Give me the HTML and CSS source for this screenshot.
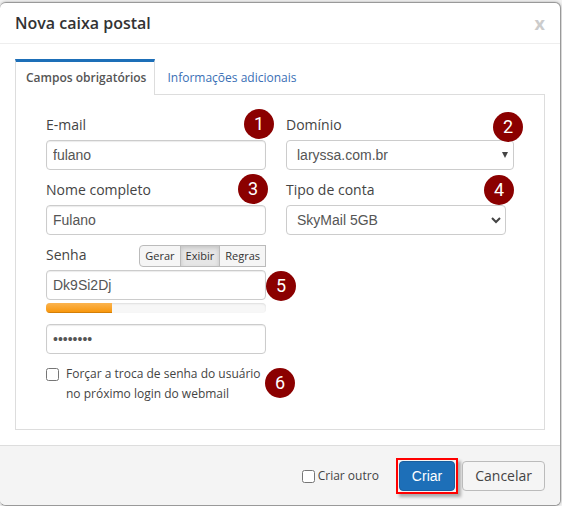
FILE: index.html
```html
<!DOCTYPE html>
<html lang="pt-BR">
<head>
    <meta charset="UTF-8">
    <title>Nova caixa postal</title>
    <link rel="stylesheet" href="styles.css">
</head>
<body>
    <form class="modal">
        <header class="modal-header">
            <h3>Nova caixa postal</h3>
            <button type="button" class="close" aria-label="Fechar">x</button>
        </header>

        <div class="modal-body">
            <nav class="tabs">
                <a class="tab active" href="#obrigatorios">Campos obrigatórios</a>
                <a class="tab" href="#adicionais">Informações adicionais</a>
            </nav>

            <div class="tab-content" id="obrigatorios">
                <div class="field">
                    <label for="email">E-mail</label>
                    <input type="text" id="email" name="email" value="fulano">
                    <span class="step step-1">1</span>
                </div>
                <div class="field">
                    <label for="domain">Domínio</label>
                    <div class="select">
                        <select id="domain" name="domain">
                            <option>laryssa.com.br</option>
                        </select>
                        <svg class="arrow" width="8" height="8" viewBox="0 0 8 8"><path d="M1 1h6L4 7z" fill="#444"/></svg>
                    </div>
                    <span class="step step-2">2</span>
                </div>
                <div class="field">
                    <label for="name">Nome completo</label>
                    <input type="text" id="name" name="name" value="Fulano">
                    <span class="step step-3">3</span>
                </div>
                <div class="field field-account">
                    <label for="account">Tipo de conta</label>
                    <div class="select">
                        <select id="account" name="account">
                            <option>SkyMail 5GB</option>
                        </select>
                        <svg class="arrow" width="10" height="8" viewBox="0 0 10 8"><path d="M1 2l4 4 4-4" fill="none" stroke="#444" stroke-width="2"/></svg>
                    </div>
                    <span class="step step-4">4</span>
                </div>
                <div class="field field-password">
                    <div class="label-row">
                        <label for="password">Senha</label>
                        <div class="btn-group">
                            <button type="button">Gerar</button>
                            <button type="button" class="active">Exibir</button>
                            <button type="button">Regras</button>
                        </div>
                    </div>
                    <input type="text" id="password" name="password" value="Dk9Si2Dj">
                    <div class="strength"><div class="bar" style="width: 30%"></div></div>
                    <input type="password" name="confirm" value="Dk9Si2Dj" aria-label="Confirmar senha">
                    <span class="step step-5">5</span>
                </div>
                <div class="field field-check">
                    <label class="check">
                        <input type="checkbox" name="force">
                        <span>Forçar a troca de senha do usuário no próximo login do webmail</span>
                    </label>
                    <span class="step step-6">6</span>
                </div>
            </div>
        </div>

        <footer class="modal-footer">
            <label class="check-small"><input type="checkbox" name="another">Criar outro</label>
            <span class="highlight"><button type="submit" class="btn btn-primary">Criar</button></span>
            <button type="button" class="btn">Cancelar</button>
        </footer>
    </form>
</body>
</html>
```

FILE: styles.css
```css
* {
    box-sizing: border-box;
}

body {
    margin: 0;
    padding: 2px 1px 0 0;
    background-color: #f2f2f2;
    color: #444;
    font: 14px/20px "Open Sans", sans-serif;
}

.modal {
    border: 1px solid #999;
    border-left: 0;
    border-radius: 6px;
    background-color: #fff;
    box-shadow: 0 0 3px rgba(0, 0, 0, 0.3);
    overflow: hidden;
}

.modal-header {
    display: flex;
    align-items: center;
    justify-content: space-between;
    height: 41px;
    padding: 0 15px;
    border-bottom: 1px solid #eee;
}

.modal-header h3 {
    margin: 0;
    color: #333;
    font-size: 16px;
    font-weight: 600;
}

.close {
    padding: 0;
    border: 0;
    background: none;
    color: #ccc;
    font: bold 18px/20px "Open Sans", sans-serif;
}

.modal-body {
    padding: 15px;
}

/* tabs */
.tabs {
    display: flex;
    font-size: 12px;
}

.tab {
    padding: 7px 12px;
    border-top: 3px solid transparent;
    color: #3a6fb5;
    line-height: 18px;
    text-decoration: none;
}

.tab.active {
    margin-bottom: -1px;
    padding: 7px 8px 8px 10px;
    border: 1px solid #ddd;
    border-top: 3px solid #1d6fb8;
    border-bottom: 0;
    background-color: #fff;
    color: #555;
    font-weight: 600;
    z-index: 1;
}

.tab-content {
    display: grid;
    grid-template-columns: minmax(0, 220px) minmax(0, 228px);
    column-gap: 20px;
    row-gap: 10px;
    padding: 20px 30px 25px;
    border: 1px solid #ddd;
}

/* fields */
.field {
    position: relative;
}

.field > label,
.label-row {
    display: block;
    margin-bottom: 5px;
}

.field-account {
    margin-right: 8px;
}

.field input[type="text"],
.field input[type="password"],
select {
    display: block;
    width: 100%;
    height: 30px;
    margin: 0;
    padding: 4px 6px;
    border: 1px solid #ccc;
    border-radius: 4px;
    background-color: #fff;
    box-shadow: inset 0 1px 1px rgba(0, 0, 0, 0.08);
    color: #555;
    font: 14px/20px "Liberation Sans", Arial, sans-serif;
}

select {
    appearance: none;
    padding: 4px 10px;
    box-shadow: none;
}

.select {
    position: relative;
}

.arrow {
    position: absolute;
    top: 11px;
    right: 5px;
}

.label-row {
    display: flex;
    align-items: flex-start;
    justify-content: space-between;
    height: 20px;
}

.btn-group {
    display: flex;
    height: 22px;
}

.btn-group button {
    margin-left: -1px;
    padding: 0 5px;
    border: 1px solid #bbb;
    background-color: #f5f5f5;
    color: #333;
    font: 11px/18px "Open Sans", sans-serif;
}

.btn-group button:first-child {
    border-radius: 4px 0 0 4px;
}

.btn-group .active {
    background-color: #e6e6e6;
    box-shadow: inset 0 2px 4px rgba(0, 0, 0, 0.15);
}

.strength {
    height: 10px;
    margin: 3px 0 11px;
    border-radius: 4px;
    background-color: #f7f7f7;
    box-shadow: inset 0 1px 2px rgba(0, 0, 0, 0.1);
    overflow: hidden;
}

.bar {
    height: 100%;
    background-image: linear-gradient(#fbb450, #f89406);
    box-shadow: inset 0 -1px 0 rgba(0, 0, 0, 0.15);
}

.field-password,
.field-check {
    grid-column: 1;
}

.field > .check {
    display: flex;
    gap: 7px;
    margin: 0 -8px 0 0;
    font-size: 12px;
}

.check input,
.check-small input {
    flex: none;
    width: 13px;
    height: 13px;
    margin: 4px 0 0;
}

/* numbered callouts */
.step {
    position: absolute;
    width: 30px;
    height: 30px;
    border-radius: 50%;
    background-color: #8b0000;
    color: #fff;
    font: 18px/30px Roboto, sans-serif;
    text-align: center;
}

.step-1 {
    top: -6px;
    right: -8px;
}

.step-2 {
    top: -3px;
    right: -9px;
}

.step-3 {
    top: -6px;
    right: -2px;
}

.step-4 {
    top: -5px;
    right: -8px;
}

.step-5 {
    top: 26px;
    right: -30px;
}

.step-6 {
    top: 4px;
    right: -29px;
}

/* footer */
.modal-footer {
    display: flex;
    align-items: center;
    justify-content: flex-end;
    height: 60px;
    padding: 0 15px;
    border-top: 1px solid #ddd;
    background-color: #f4f4f4;
}

.check-small {
    display: flex;
    gap: 3px;
    margin-right: 17px;
    font-size: 12px;
}

.highlight {
    display: flex;
    margin-right: 4px;
    padding: 1px;
    border: 2px solid #f00;
    box-shadow: 3px 3px 3px rgba(0, 0, 0, 0.3);
}

.btn {
    height: 30px;
    padding: 0 12px;
    border: 1px solid #bbb;
    border-radius: 4px;
    background-color: #f5f5f5;
    color: #444;
    font: 14px/20px "Open Sans", sans-serif;
}

.btn-primary {
    border-color: #1a5f9e;
    background-color: #1d6fb8;
    color: #fff;
    font-family: "Liberation Sans", Arial, sans-serif;
}
```
